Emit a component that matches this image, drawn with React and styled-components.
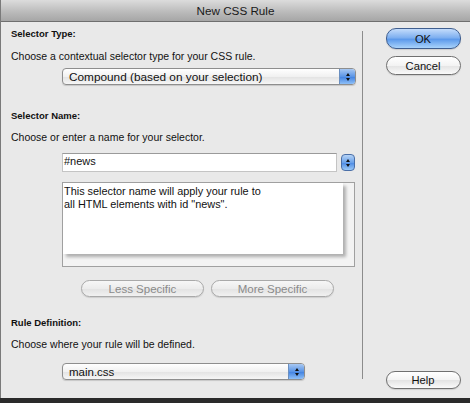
import React from "react";
import styled, { createGlobalStyle, css } from "styled-components";

const Global = createGlobalStyle`
  html, body { margin: 0; padding: 0; background: #2a2a2a; }
  body { width: 470px; height: 403px; overflow: hidden; font-family: "Liberation Sans", "DejaVu Sans", sans-serif; }
`;

const Window = styled.div`
  width: 470px;
  height: 398px;
  background: #e9e9e9;
  display: flex;
  flex-direction: column;
  box-sizing: border-box;
  border-left: 1px solid #7a7a7a;
`;

const TitleBar = styled.div`
  height: 22px;
  background: linear-gradient(#dcdcdc, #b9b9b9 60%, #a6a6a6);
  border-bottom: 1px solid #6f6f6f;
  display: flex;
  align-items: center;
  justify-content: center;
  font-size: 11.7px;
  color: #1a1a1a;
  box-sizing: border-box;
`;

const Body = styled.div`
  flex: 1;
  display: flex;
`;

const Main = styled.div`
  width: 360px;
  padding: 6px 0 0 10px;
  display: flex;
  flex-direction: column;
  box-sizing: border-box;
`;

const Divider = styled.div`
  width: 1px;
  background: #8c8c8c;
  margin: 9px 0 19px 1px;
`;

const Side = styled.div`
  flex: 1;
  display: flex;
  flex-direction: column;
  align-items: center;
  padding: 6px 0 9px 13px;
  box-sizing: border-box;
`;

const Heading = styled.div`
  font-size: 9.5px;
  font-weight: bold;
  color: #111;
  height: 12px;
  line-height: 12px;
  margin-top: ${(p) => p.$mt || 0}px;
`;

const Hint = styled.div`
  font-size: 10.5px;
  color: #111;
  height: 14px;
  line-height: 14px;
  margin-top: ${(p) => p.$mt || 0}px;
`;

const SelectBox = styled.div`
  margin: ${(p) => p.$mt || 0}px 0 0 51px;
  width: ${(p) => p.$w}px;
  height: ${(p) => p.$h || 17}px;
  box-sizing: border-box;
  border: 1px solid #8e8e8e;
  border-radius: 4px;
  background: linear-gradient(#ffffff, #f1f1f1 50%, #e2e2e2 51%, #f6f6f6);
  display: flex;
  align-items: center;
  overflow: hidden;
  box-shadow: 0 1px 1px rgba(0,0,0,0.15);
`;

const SelectText = styled.span`
  flex: 1;
  padding-left: 6px;
  font-size: ${(p) => p.$fs || 11.8}px;
  color: #111;
`;

const ArrowCap = styled.div`
  width: ${(p) => p.$w || 15}px;
  align-self: stretch;
  background: linear-gradient(#a8c8f2, #5b95e6 50%, #3e7fe0 51%, #8fc0f7);
  border-left: 1px solid #6a8fc0;
  display: flex;
  flex-direction: column;
  align-items: center;
  justify-content: center;
  gap: 2px;
`;

const Tri = styled.div`
  width: 0;
  height: 0;
  border-left: 2.5px solid transparent;
  border-right: 2.5px solid transparent;
  ${(p) =>
    p.$up
      ? css`border-bottom: 3px solid #111;`
      : css`border-top: 3px solid #111;`}
`;

const Arrows = ({ w }) => (
  <ArrowCap $w={w}>
    <Tri $up />
    <Tri />
  </ArrowCap>
);

const NameRow = styled.div`
  margin: 9px 0 0 51px;
  display: flex;
  align-items: center;
  gap: 4px;
`;

const TextInput = styled.div`
  width: 275px;
  height: 19px;
  box-sizing: border-box;
  background: #fff;
  border: 1px solid #c4c4c4;
  border-top-color: #9a9a9a;
  font-size: 11px;
  color: #111;
  padding: 1px 0 0 1px;
`;

const Stepper = styled.div`
  width: 14px;
  height: 17px;
  border-radius: 4px;
  box-sizing: border-box;
  border: 1px solid #4a6fa8;
  background: linear-gradient(#b6d3f6, #6ba2ea 50%, #4a88e3 51%, #9ccaf8);
  display: flex;
  flex-direction: column;
  align-items: center;
  justify-content: center;
  gap: 2px;
`;

const Panel = styled.div`
  margin: 10px 0 0 51px;
  width: 293px;
  height: 85px;
  box-sizing: border-box;
  border: 1px solid #a0a0a0;
  background: #f3f3f3;
  display: flex;
  flex-direction: column;
`;

const PanelText = styled.div`
  width: 280px;
  height: 71px;
  background: #fff;
  box-shadow: 3px 3px 3px rgba(0,0,0,0.28);
  font-size: 10.9px;
  line-height: 13px;
  color: #111;
  padding: 2px 0 0 1px;
  box-sizing: border-box;
`;

const ButtonRow = styled.div`
  margin: 13px 0 0 70px;
  display: flex;
  gap: 7px;
`;

const Pill = styled.div`
  width: ${(p) => p.$w || 123}px;
  height: ${(p) => p.$h || 17}px;
  box-sizing: border-box;
  border-radius: 10px;
  border: 1px solid ${(p) => (p.$primary ? "#3f5e8f" : p.$disabled ? "#a9a9a9" : "#707070")};
  background: ${(p) =>
    p.$primary
      ? "linear-gradient(#c4dcfb, #7fb0f0 45%, #5d9aeb 55%, #a9d3fb)"
      : p.$disabled
      ? "linear-gradient(#f7f7f7, #ececec 50%, #e2e2e2 51%, #f1f1f1)"
      : "linear-gradient(#ffffff, #f3f3f3 50%, #e3e3e3 51%, #fafafa)"};
  display: flex;
  align-items: center;
  justify-content: center;
  font-size: ${(p) => (p.$disabled ? 11.5 : 11.2)}px;
  color: ${(p) => (p.$disabled ? "#8a8a8a" : "#111")};
  box-shadow: 0 1px 1px rgba(0,0,0,0.12);
`;

const Gap = styled.div`
  flex: ${(p) => (p.$size ? `0 0 ${p.$size}px` : 1)};
`;

export default function App() {
  return (
    <>
      <Global />
      <Window>
        <TitleBar>New CSS Rule</TitleBar>
        <Body>
          <Main>
            <Heading>Selector Type:</Heading>
            <Hint $mt={9}>Choose a contextual selector type for your CSS rule.</Hint>
            <SelectBox $mt={5} $w={294} $h={17}>
              <SelectText>Compound (based on your selection)</SelectText>
              <Arrows w={15} />
            </SelectBox>
            <Heading $mt={25}>Selector Name:</Heading>
            <Hint $mt={8}>Choose or enter a name for your selector.</Hint>
            <NameRow>
              <TextInput>#news</TextInput>
              <Stepper>
                <Tri $up />
                <Tri />
              </Stepper>
            </NameRow>
            <Panel>
              <PanelText>
                This selector name will apply your rule to
                <br />
                all HTML elements with id "news".
              </PanelText>
            </Panel>
            <ButtonRow>
              <Pill $disabled>Less Specific</Pill>
              <Pill $disabled>More Specific</Pill>
            </ButtonRow>
            <Heading $mt={20}>Rule Definition:</Heading>
            <Hint $mt={8}>Choose where your rule will be defined.</Hint>
            <SelectBox $mt={12} $w={243} $h={17}>
              <SelectText $fs={11.5}>main.css</SelectText>
              <Arrows w={15} />
            </SelectBox>
          </Main>
          <Divider />
          <Side>
            <Pill $primary $w={75} $h={21}>OK</Pill>
            <Gap $size={7} />
            <Pill $w={75} $h={19}>Cancel</Pill>
            <Gap />
            <Pill $w={75} $h={18}>Help</Pill>
          </Side>
        </Body>
      </Window>
    </>
  );
}
